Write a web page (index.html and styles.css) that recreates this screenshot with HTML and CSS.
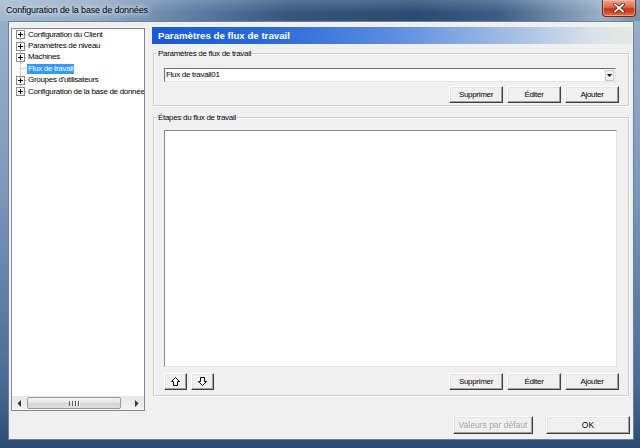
FILE: index.html
```html
<!DOCTYPE html>
<html lang="fr">
<head>
<meta charset="utf-8">
<title>Configuration de la base de données</title>
<link rel="stylesheet" href="styles.css">
</head>
<body>
<div class="window">
  <div class="titlebar">
    <span class="title">Configuration de la base de données</span>
    <div class="close">
      <svg width="12" height="10" viewBox="0 0 12 10"><path d="M2 1.5 L10 8.5 M10 1.5 L2 8.5" stroke="#5a1a10" stroke-width="3.4" stroke-linecap="square"/><path d="M2 1.5 L10 8.5 M10 1.5 L2 8.5" stroke="#fff" stroke-width="1.8" stroke-linecap="square"/></svg>
    </div>
  </div>
  <div class="frame">
    <div class="client">
      <div class="main">
        <div class="tree">
          <div class="tree-items">
            <div class="node"><svg class="gutter" width="11" height="11" viewBox="0 0 11 11"><path d="M4.5 10 V11.5 M9 5.5 H11" class="dots"/><rect x="0.5" y="1.5" width="8" height="8" class="box"/><path d="M2 5.5 H7 M4.5 3 V8" class="plus"/></svg><span class="label">Configuration du Client</span></div>
            <div class="node"><svg class="gutter" width="11" height="11" viewBox="0 0 11 11"><path d="M4.5 -0.5 V1 M4.5 10 V11.5 M9 5.5 H11" class="dots"/><rect x="0.5" y="1.5" width="8" height="8" class="box"/><path d="M2 5.5 H7 M4.5 3 V8" class="plus"/></svg><span class="label">Paramètres de niveau</span></div>
            <div class="node"><svg class="gutter" width="11" height="11" viewBox="0 0 11 11"><path d="M4.5 -0.5 V1 M4.5 10 V11.5 M9 5.5 H11" class="dots"/><rect x="0.5" y="1.5" width="8" height="8" class="box"/><path d="M2 5.5 H7 M4.5 3 V8" class="plus"/></svg><span class="label">Machines</span></div>
            <div class="node"><svg class="gutter" width="11" height="11" viewBox="0 0 11 11"><path d="M4.5 -0.5 V11.5 M4.5 5.5 H11" class="dots"/></svg><span class="label selected">Flux de travail</span></div>
            <div class="node"><svg class="gutter" width="11" height="11" viewBox="0 0 11 11"><path d="M4.5 -0.5 V1 M4.5 10 V11.5 M9 5.5 H11" class="dots"/><rect x="0.5" y="1.5" width="8" height="8" class="box"/><path d="M2 5.5 H7 M4.5 3 V8" class="plus"/></svg><span class="label">Groupes d'utilisateurs</span></div>
            <div class="node"><svg class="gutter" width="11" height="11" viewBox="0 0 11 11"><path d="M4.5 -0.5 V1 M9 5.5 H11" class="dots"/><rect x="0.5" y="1.5" width="8" height="8" class="box"/><path d="M2 5.5 H7 M4.5 3 V8" class="plus"/></svg><span class="label">Configuration de la base de données</span></div>
          </div>
          <div class="hscroll">
            <div class="sb-arrow"><svg width="4" height="7" viewBox="0 0 4 7"><path d="M4 0 V7 L0.5 3.5 Z" fill="#333"/></svg></div>
            <div class="sb-track">
              <div class="sb-thumb"><span class="grip"></span><span class="grip"></span><span class="grip"></span><span class="grip"></span></div>
            </div>
            <div class="sb-arrow"><svg width="4" height="7" viewBox="0 0 4 7"><path d="M0 0 V7 L3.5 3.5 Z" fill="#333"/></svg></div>
          </div>
        </div>
        <div class="pane">
          <div class="pane-header">Paramètres de flux de travail</div>
          <fieldset class="group g1">
            <legend>Paramètres de flux de travail</legend>
            <div class="combo">
              <span class="combo-text">Flux de travail01</span>
              <span class="combo-btn"><svg width="7" height="4" viewBox="0 0 7 4"><path d="M0 0 H7 L3.5 4 Z" fill="#000"/></svg></span>
            </div>
            <div class="btn-row">
              <button class="btn">Supprimer</button>
              <button class="btn">Éditer</button>
              <button class="btn">Ajouter</button>
            </div>
          </fieldset>
          <fieldset class="group g2">
            <legend>Étapes du flux de travail</legend>
            <div class="listbox"></div>
            <div class="btn-row split">
              <div class="arrows">
                <button class="btn icon-btn"><svg width="9" height="9" viewBox="0 0 9 9"><path d="M4.5 0.5 L8.5 4.5 H6.5 V8.5 H2.5 V4.5 H0.5 Z" fill="#fff" stroke="#000"/></svg></button>
                <button class="btn icon-btn"><svg width="9" height="9" viewBox="0 0 9 9"><path d="M4.5 8.5 L8.5 4.5 H6.5 V0.5 H2.5 V4.5 H0.5 Z" fill="#fff" stroke="#000"/></svg></button>
              </div>
              <div class="actions">
                <button class="btn">Supprimer</button>
                <button class="btn">Éditer</button>
                <button class="btn">Ajouter</button>
              </div>
            </div>
          </fieldset>
        </div>
      </div>
      <div class="footer">
        <button class="btn big disabled" disabled>Valeurs par défaut</button>
        <button class="btn big ok">OK</button>
      </div>
    </div>
  </div>
</div>
</body>
</html>
```

FILE: styles.css
```css
html, body {
  margin: 0;
  padding: 0;
}
body {
  width: 640px;
  height: 448px;
  overflow: hidden;
  font-family: "Liberation Sans", Arial, sans-serif;
  font-size: 8px;
  letter-spacing: -0.3px;
  color: #000;
}
.window {
  width: 640px;
  height: 448px;
  display: flex;
  flex-direction: column;
  background: linear-gradient(to bottom, #9ab3cc 0%, #7d9bbb 40%, #4a6c94 85%, #2a4a72 100%);
}
.titlebar {
  height: 21px;
  flex: none;
  display: flex;
  justify-content: space-between;
  align-items: flex-start;
  padding-left: 6px;
  padding-right: 4px;
  background:
    linear-gradient(to bottom, rgba(255,255,255,0.18), rgba(255,255,255,0) 60%),
    linear-gradient(to right, #a3b9d0 0%, #94adc7 14%, #5d7ea3 30%, #35567d 45%, #2a4a71 65%, #3d5d83 78%, #7691ae 88%, #9bb0c6 94%, #7790ab 100%);
}
.title {
  font-family: "Liberation Sans", Arial, sans-serif;
  font-size: 9px;
  letter-spacing: -0.15px;
  line-height: 11px;
  margin-top: 5px;
  color: #000;
  text-shadow: 0 0 4px #dce7f2, 0 0 6px #dce7f2, 0 0 8px #c9d8e8;
}
.close {
  width: 34px;
  height: 17px;
  box-sizing: border-box;
  border: 1px solid #6b2a1e;
  border-top: none;
  border-radius: 0 0 4px 4px;
  background: linear-gradient(to bottom, #eba48e 0%, #dc6c4f 45%, #c8341a 55%, #d44a2a 80%, #e47a58 100%);
  box-shadow: inset 0 0 0 1px rgba(255,220,210,0.45);
  display: flex;
  align-items: center;
  justify-content: center;
}
.frame {
  flex: 1;
  padding: 0 6px 8px 8px;
  display: flex;
}
.client {
  flex: 1;
  border: 1px solid #6a7f98;
  background: #f0f0f0;
  display: flex;
  flex-direction: column;
}
.main {
  height: 389px;
  padding-top: 5px;
  box-sizing: border-box;
  display: flex;
  align-items: flex-start;
}
.tree {
  margin-left: 2px;
  margin-top: 1px;
  width: 134px;
  height: 383px;
  box-sizing: border-box;
  border: 1px solid #828790;
  background: #fff;
  display: flex;
  flex-direction: column;
  overflow: hidden;
}
.tree-items {
  flex: 1;
  padding-left: 4px;
  overflow: hidden;
}
.node {
  height: 11.4px;
  display: flex;
  align-items: center;
  white-space: nowrap;
}
.gutter {
  flex: none;
  overflow: visible;
  width: 11px;
  height: 11px;
}
.dots {
  stroke: #a0a0a0;
  stroke-width: 1;
  stroke-dasharray: 1 1;
  fill: none;
}
.box {
  fill: #fff;
  stroke: #8c8c8c;
}
.plus {
  stroke: #000;
  stroke-width: 1;
  fill: none;
}
.label {
  padding: 0 1px;
  line-height: 10px;
  height: 10px;
}
.label.selected {
  background: #3399ff;
  color: #fff;
}
.hscroll {
  height: 14px;
  flex: none;
  display: flex;
  background: linear-gradient(to bottom, #e6e6e6, #f4f4f4);
}
.sb-arrow {
  width: 14px;
  flex: none;
  display: flex;
  align-items: center;
  justify-content: center;
}
.sb-track {
  flex: 1;
  display: flex;
  align-items: center;
}
.sb-thumb {
  margin-left: 1px;
  width: 94px;
  height: 12px;
  box-sizing: border-box;
  border: 1px solid #9a9a9a;
  border-radius: 2px;
  background: linear-gradient(to bottom, #f4f4f4, #e3e3e3 50%, #d6d6d6 51%, #dedede);
  display: flex;
  align-items: center;
  justify-content: center;
  gap: 1px;
}
.grip {
  width: 1px;
  height: 5px;
  background: #555;
  box-shadow: 1px 0 #fff;
  margin-right: 1px;
}
.pane {
  margin-left: 7px;
  width: 480px;
  display: flex;
  flex-direction: column;
}
.pane-header {
  height: 17px;
  box-sizing: border-box;
  padding-left: 6px;
  font-family: "Liberation Sans", Arial, sans-serif;
  font-weight: bold;
  font-size: 9.7px;
  letter-spacing: 0;
  line-height: 17px;
  color: #fff;
  background: linear-gradient(to right, #1a58d6 0%, #2b6ad9 25%, #5b8ddf 50%, #a3bfe6 75%, #d8e2e9 92%, #e6ebe0 100%);
}
.group {
  margin: 0;
  margin-left: 1px;
  width: 476px;
  box-sizing: border-box;
  padding: 0 10px 2px 10px;
  border: 1px solid #cdcdcd;
  box-shadow: inset 1px 1px 0 #fff, 1px 1px 0 #fff;
}
.group legend {
  padding: 0 1px;
  margin-left: -7px;
  line-height: 11px;
  height: 11px;
}
.g1 {
  margin-top: 4px;
  height: 58px;
}
.g2 {
  margin-top: 6px;
  height: 284px;
  padding-bottom: 4px;
}
.combo {
  margin-top: 9px;
  height: 14px;
  width: 452px;
  box-sizing: border-box;
  border: 1px solid;
  border-color: #6f6f6f #e3e3e3 #e3e3e3 #6f6f6f;
  background: #fff;
  display: flex;
  align-items: center;
  justify-content: space-between;
}
.combo-text {
  padding-left: 1px;
  line-height: 12px;
}
.combo-btn {
  width: 9px;
  height: 11px;
  margin-right: 1px;
  box-sizing: border-box;
  border: 1px solid #c8c8c8;
  background: #f2f2f2;
  display: flex;
  align-items: center;
  justify-content: center;
}
.combo-btn svg {
  width: 5px;
  height: 3px;
}
.btn-row {
  margin-top: 4px;
  display: flex;
  justify-content: flex-end;
  gap: 4px;
  margin-right: -1px;
}
.g2 .btn-row {
  margin-top: 6px;
}
.btn-row.split {
  justify-content: space-between;
}
.arrows, .actions {
  display: flex;
  gap: 4px;
}
.btn {
  font-family: inherit;
  font-size: 8px;
  letter-spacing: -0.3px;
  color: #000;
  height: 17px;
  width: 54px;
  padding: 0;
  margin: 0;
  box-sizing: border-box;
  background: #f0f0f0;
  border: 1px solid;
  border-color: #fff #404040 #404040 #fff;
  box-shadow: inset -1px -1px 0 #a0a0a0, inset 1px 1px 0 #e3e3e3;
  display: flex;
  align-items: center;
  justify-content: center;
}
.icon-btn {
  width: 23px;
}
.listbox {
  margin-top: 7px;
  height: 237px;
  width: 453px;
  box-sizing: border-box;
  border: 1px solid;
  border-color: #8a8a8a #e3e3e3 #e3e3e3 #8a8a8a;
  background: #fff;
}
.footer {
  padding-top: 5px;
  padding-right: 3px;
  display: flex;
  justify-content: flex-end;
  gap: 13px;
}
.btn.big {
  height: 18px;
  font-family: "Liberation Sans", Arial, sans-serif;
  font-size: 8.5px;
  letter-spacing: 0;
}
.btn.disabled {
  width: 80px;
  color: #a0a0a0;
  text-shadow: 1px 1px 0 #fff;
}
.btn.ok {
  width: 84px;
}
```
